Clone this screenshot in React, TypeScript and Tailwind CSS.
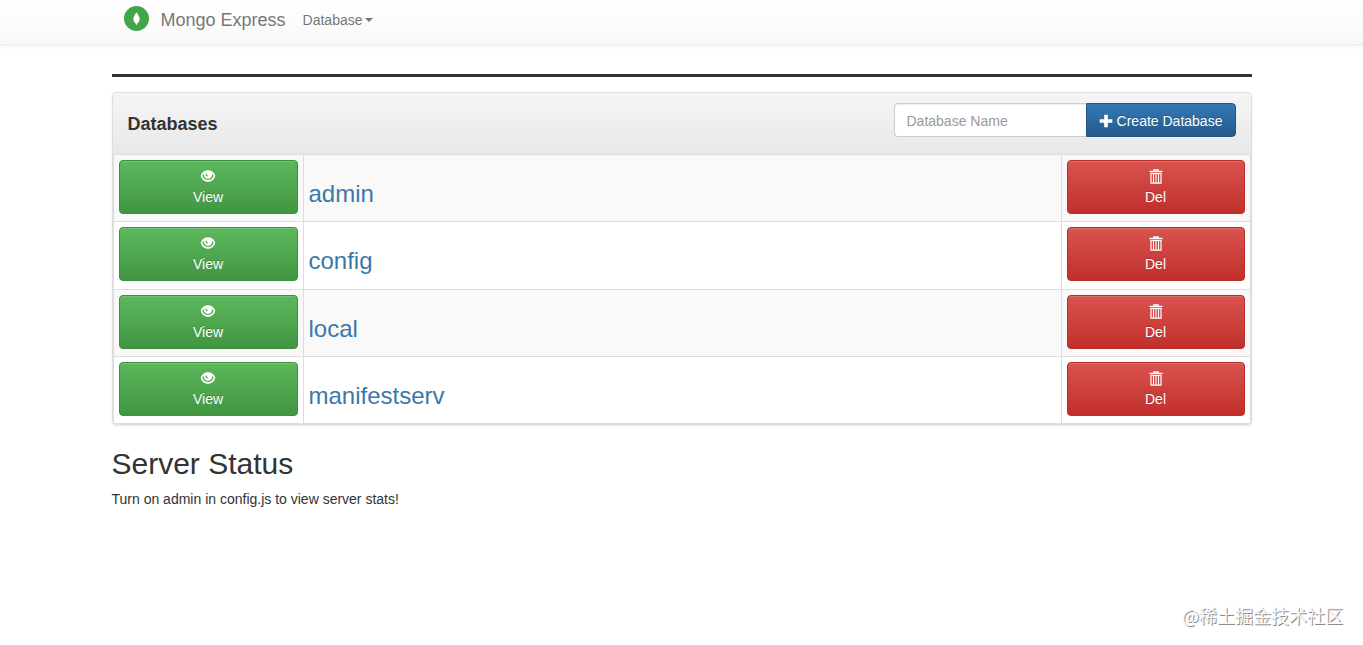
import React from 'react';

const databases = ['admin', 'config', 'local', 'manifestserv'];

function LeafLogo() {
  return (
    <svg viewBox="0 0 26 26" className="size-[26px]" aria-hidden="true">
      <circle cx="12.5" cy="12.5" r="12.5" fill="#43a547" />
      <path d="M12.5 6.2C13.8 8.4 15.6 10.2 15.6 12.7C15.6 15.2 14.2 16.7 13.1 17.7L12.8 19H12.2L11.9 17.7C10.8 16.7 9.4 15.2 9.4 12.7C9.4 10.2 11.2 8.4 12.5 6.2Z" fill="#fff" />
    </svg>
  );
}

function EyeIcon() {
  return (
    <svg viewBox="0 0 16 14" className="h-[14px] w-4" aria-hidden="true">
      <path
        fillRule="evenodd"
        fill="currentColor"
        d="M8 1.2C12 1.2 14.4 3.8 15.3 6.8C14.3 10.6 11.6 12.8 8 12.8C4.4 12.8 1.7 10.6.7 6.8C1.6 3.8 4 1.2 8 1.2ZM4.4 4.2C3.3 5 2.7 6 2.4 7C3.3 9.5 5.4 11.1 8 11.1C10.6 11.1 12.7 9.5 13.6 7C13.3 6 12.7 5 11.6 4.2C12 4.9 12.1 5.5 12.1 6.1C12.1 8.2 10.3 9.9 8 9.9C5.7 9.9 3.9 8.2 3.9 6.1C3.9 5.5 4 4.9 4.4 4.2ZM6.7 4.2C5.6 4.7 5.3 5.7 5.8 6.7C6.5 7.5 7.7 7.5 8.3 6.8C7.4 6.7 6.5 5.6 6.7 4.2Z"
      />
    </svg>
  );
}

function TrashIcon() {
  return (
    <svg viewBox="0 0 14 16" className="h-4 w-[14px]" fill="none" stroke="currentColor" aria-hidden="true">
      <path d="M.5 2.5H13.5M4.9 2.5V.8H9.1V2.5" strokeWidth="1.3" />
      <path d="M2 4.5H12V14.2H2Z" strokeWidth="1.2" />
      <path d="M4.5 5V14M7 5V14M9.5 5V14" strokeWidth="1.1" />
    </svg>
  );
}

function PlusIcon() {
  return (
    <svg viewBox="0 0 14 14" className="size-[14px]" aria-hidden="true">
      <path d="M5.2 .8H8.8V5.2H13.3V8.8H8.8V13.2H5.2V8.8H.7V5.2H5.2Z" fill="currentColor" />
    </svg>
  );
}

const actionBase =
  'flex h-[54px] w-full flex-col items-center rounded border pt-2 text-sm leading-5 text-white [text-shadow:0_-1px_0_rgba(0,0,0,0.2)] shadow-[inset_0_1px_0_rgba(255,255,255,0.15)]';

export default function App() {
  return (
    <div className="relative min-h-screen bg-white pb-6 font-['Liberation_Sans',Arial,sans-serif] text-sm leading-5 text-[#333]">
      <nav className="h-[45px] border-b border-[#ebebeb] bg-linear-to-b from-white to-[#f8f8f8] shadow-[0_1px_5px_rgba(0,0,0,0.075)]">
        <div className="mx-auto flex h-10 max-w-[1140px] items-center pl-3 text-[#777] [text-shadow:0_1px_0_rgba(255,255,255,0.25)]">
          <a href="#home" className="flex items-center gap-[11px] text-lg leading-5">
            <span className="pb-[3px]">
              <LeafLogo />
            </span>
            Mongo Express
          </a>
          <button type="button" className="ml-[17px] flex items-center gap-[2px]">
            Database
            <svg viewBox="0 0 8 4" className="h-1 w-2" aria-hidden="true">
              <path d="M0 0H8L4 4Z" fill="currentColor" />
            </svg>
          </button>
        </div>
      </nav>

      <main className="mx-auto max-w-[1140px] pt-[29px]">
        <hr className="border-t-3 border-[#333]" />

        <section className="mt-[15px] rounded border border-[#ddd] shadow-[0_1px_2px_rgba(0,0,0,0.1)]">
          <header className="flex h-[61px] items-start justify-between rounded-t bg-linear-to-b from-[#f5f5f5] to-[#e8e8e8] px-[15px] pt-[10px]">
            <h3 className="pt-[11px] text-lg leading-5 font-bold">Databases</h3>
            <form className="flex" onSubmit={(e) => e.preventDefault()}>
              <input
                type="text"
                aria-label="Database Name"
                placeholder="Database Name"
                className="h-[34px] w-[192px] rounded-l border border-r-0 border-[#ccc] bg-white px-3 pt-[2px] text-sm shadow-[inset_0_1px_1px_rgba(0,0,0,0.075)] outline-none placeholder:text-[#999]"
              />
              <button
                type="submit"
                className="flex h-[34px] w-[150px] items-center justify-center gap-1 rounded-r border border-[#245580] bg-linear-to-b from-[#337ab7] to-[#265a88] pt-[2px] text-white [text-shadow:0_-1px_0_rgba(0,0,0,0.2)]"
              >
                <PlusIcon />
                Create Database
              </button>
            </form>
          </header>

          <table className="h-[270px] w-full table-fixed border-collapse" aria-label="Databases">
            <colgroup>
              <col className="w-[190px]" />
              <col />
              <col className="w-[189px]" />
            </colgroup>
            <tbody>
              {databases.map((name) => (
                <tr key={name} className="odd:bg-[#f9f9f9]">
                  <td className="border border-[#ddd] px-[5px] pt-[5px] align-top">
                    <button
                      type="button"
                      aria-label={`View ${name}`}
                      className={`${actionBase} border-[#3e8f3e] bg-linear-to-b from-[#5cb85c] to-[#419641]`}
                    >
                      <EyeIcon />
                      <span className="pt-1">View</span>
                    </button>
                  </td>
                  <td className="border border-[#ddd] px-[5px] pt-[25px] align-top">
                    <h3 className="text-2xl leading-7">
                      <a href={`#${name}`} className="text-[#3b78a9]">
                        {name}
                      </a>
                    </h3>
                  </td>
                  <td className="border border-[#ddd] px-[5px] pt-[5px] align-top">
                    <button
                      type="button"
                      aria-label={`Delete ${name}`}
                      className={`${actionBase} border-[#b92c28] bg-linear-to-b from-[#d9534f] to-[#c12e2a]`}
                    >
                      <TrashIcon />
                      <span className="pt-[2px]">Del</span>
                    </button>
                  </td>
                </tr>
              ))}
            </tbody>
          </table>
        </section>

        <h2 className="mt-[21px] text-3xl leading-9">Server Status</h2>
        <p className="mt-[7px]">Turn on admin in config.js to view server stats!</p>
      </main>

      <div className="absolute right-5 bottom-4 font-['Noto_Sans_CJK_SC',sans-serif] text-lg leading-7 text-[#f8f8f8] [text-shadow:1px_1px_0_#8c8c8c]">
        @稀土掘金技术社区
      </div>
    </div>
  );
}
